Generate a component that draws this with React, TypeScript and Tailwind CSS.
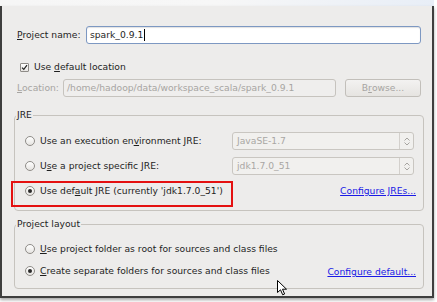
import React from "react";

const font = { fontFamily: '"DejaVu Sans", Verdana, sans-serif' };

const Radio = ({ checked }: { checked?: boolean }) => (
  <span className="w-[10px] h-[10px] rounded-full border border-[#8f8c88] bg-gradient-to-b from-[#ffffff] to-[#e6e4e1] flex items-center justify-center shrink-0">
    {checked && <span className="w-[4px] h-[4px] rounded-full bg-[#2a2a2a]" />}
  </span>
);

const Combo = ({ value }: { value: string }) => (
  <div className="flex items-stretch w-[182px] h-[18px] border border-[#c9c6c1] rounded-[3px] bg-[#f1f0ee] text-[#a9a7a4]">
    <span className="flex-1 pl-[4px] flex items-center">{value}</span>
    <span className="w-[14px] border-l border-[#d3d0cc] flex items-center justify-center">
      <svg width="6" height="9" viewBox="0 0 6 9" fill="none" stroke="#a6a4a0" strokeWidth="1">
        <path d="M0.5 3.5 L3 1 L5.5 3.5" />
        <path d="M0.5 5.5 L3 8 L5.5 5.5" />
      </svg>
    </span>
  </div>
);

const Cursor = () => (
  <svg width="11" height="16" viewBox="0 0 11 16" className="absolute left-[277px] top-[280px]">
    <path d="M0.5 0.5 L0.5 12.5 L3.5 9.8 L5.7 14.8 L7.6 14 L5.5 9.2 L9.5 9.2 Z" fill="#fff" stroke="#000" strokeWidth="1" strokeLinejoin="round" />
  </svg>
);

export default function App() {
  return (
    <div className="relative w-[437px] h-[302px] bg-white overflow-hidden text-[9.2px] leading-[12px] text-[#1e1e1e]" style={font}>
      <div className="h-[6px] w-[434px] bg-gradient-to-r from-[#f6f6f6] via-[#f7f7f7] to-[#e8eef7]" />
      <div className="w-[434px] h-[292px] bg-[#edeceb] border-l-2 border-r-2 border-b-2 border-[#3e3e3e] pl-[12px] pr-[8px] pt-[20px] shadow-[0_2px_3px_rgba(0,0,0,0.35)]">
        <div className="px-[3px]">
          <div className="flex items-center h-[18px]">
            <span className="w-[69px] shrink-0"><u>P</u>roject name:</span>
            <div className="flex-1 h-[18px] border border-[#7d98c2] rounded-[3px] bg-white shadow-[inset_0_1px_1px_rgba(0,0,0,0.12)] flex items-center pl-[3px]">
              spark_0.9.1<span className="inline-block w-px h-[12px] bg-black ml-[1px]" />
            </div>
          </div>
          <div className="flex items-center h-[14px] mt-[16px] pl-[3px]">
            <span className="w-[9px] h-[9px] border border-[#8f8c88] rounded-[1px] bg-gradient-to-b from-white to-[#e8e6e3] flex items-center justify-center shrink-0">
              <svg width="7" height="7" viewBox="0 0 7 7" fill="none" stroke="#222" strokeWidth="1.2">
                <path d="M1 3.6 L2.8 5.4 L6 1.2" />
              </svg>
            </span>
            <span className="ml-[5px]">Use <u>d</u>efault location</span>
          </div>
          <div className="flex items-center h-[18px] mt-[5px] text-[#a7a5a2]">
            <span className="w-[46px] shrink-0"><u>L</u>ocation:</span>
            <div className="w-[273px] h-[18px] border border-[#c6c3be] rounded-[3px] bg-[#efeeed] flex items-center pl-[3px] overflow-hidden whitespace-nowrap">
              /home/hadoop/data/workspace_scala/spark_0.9.1
            </div>
            <div className="ml-auto w-[76px] h-[18px] border border-[#c2bfba] rounded-[3px] bg-gradient-to-b from-[#f3f2f1] to-[#e6e4e1] flex items-center justify-center">
              B<u>r</u>owse...
            </div>
          </div>
        </div>

        <fieldset className="mt-[12px] border border-[#c6c3be] rounded-[4px] pl-[10px] pr-[9px] pb-[10px]">
          <legend className="-ml-[9px] px-[1px]">JRE</legend>
          <div className="flex flex-col gap-[7px] pt-[11px]">
            <div className="flex items-center h-[18px]">
              <div className="w-[207px] flex items-center">
                <Radio />
                <span className="ml-[5px]">Use an execution en<u>v</u>ironment JRE:</span>
              </div>
              <Combo value="JavaSE-1.7" />
            </div>
            <div className="flex items-center h-[18px]">
              <div className="w-[207px] flex items-center">
                <Radio />
                <span className="ml-[5px]">U<u>s</u>e a project specific JRE:</span>
              </div>
              <Combo value="jdk1.7.0_51" />
            </div>
            <div className="relative flex items-center h-[18px]">
              <Radio checked />
              <span className="ml-[5px]">Use def<u>a</u>ult JRE (currently 'jdk1.7.0_51')</span>
              <a className="ml-auto -mr-[2px] text-[#1a1ae6] underline">Configure JREs...</a>
              <div className="absolute -left-[14px] -top-[1px] w-[222px] h-[26px] border-2 border-[#e41010]" />
            </div>
          </div>
        </fieldset>

        <fieldset className="mt-[7px] border border-[#c6c3be] rounded-[4px] pl-[10px] pr-[9px] pb-[8px]">
          <legend className="-ml-[9px] px-[1px]">Project layout</legend>
          <div className="flex flex-col gap-[4px] pt-[10px]">
            <div className="flex items-center h-[18px]">
              <Radio />
              <span className="ml-[5px]"><u>U</u>se project folder as root for sources and class files</span>
            </div>
            <div className="flex items-center h-[18px]">
              <Radio checked />
              <span className="ml-[5px]"><u>C</u>reate separate folders for sources and class files</span>
              <a className="ml-auto -mr-[2px] mt-[2px] text-[#1a1ae6] underline">Configure default...</a>
            </div>
          </div>
        </fieldset>
      </div>
      <Cursor />
    </div>
  );
}
